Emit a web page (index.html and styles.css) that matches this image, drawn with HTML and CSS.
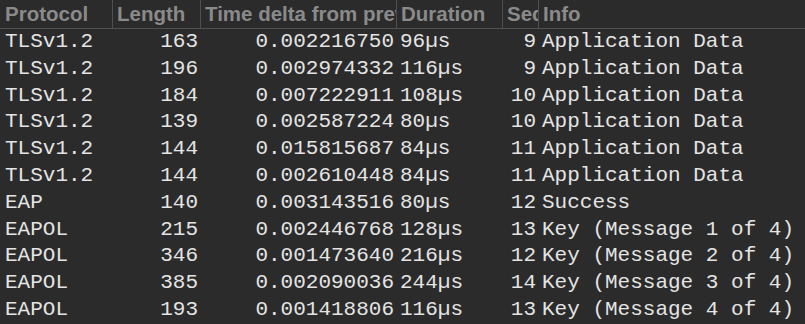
FILE: index.html
```html
<!DOCTYPE html>
<html>
<head>
<meta charset="utf-8">
<link rel="stylesheet" href="styles.css">
</head>
<body>
<div class="table">
  <div class="row head">
    <div class="cell first">Protocol</div>
    <div class="cell">Length</div>
    <div class="cell">Time delta from previous captured frame</div>
    <div class="cell">Duration</div>
    <div class="cell">Sequence</div>
    <div class="cell last">Info</div>
  </div>
  <div class="row"><div class="cell first">TLSv1.2</div><div class="cell num">163</div><div class="cell num">0.002216750</div><div class="cell">96µs</div><div class="cell num">9</div><div class="cell info">Application Data</div></div>
  <div class="row"><div class="cell first">TLSv1.2</div><div class="cell num">196</div><div class="cell num">0.002974332</div><div class="cell">116µs</div><div class="cell num">9</div><div class="cell info">Application Data</div></div>
  <div class="row"><div class="cell first">TLSv1.2</div><div class="cell num">184</div><div class="cell num">0.007222911</div><div class="cell">108µs</div><div class="cell num">10</div><div class="cell info">Application Data</div></div>
  <div class="row"><div class="cell first">TLSv1.2</div><div class="cell num">139</div><div class="cell num">0.002587224</div><div class="cell">80µs</div><div class="cell num">10</div><div class="cell info">Application Data</div></div>
  <div class="row"><div class="cell first">TLSv1.2</div><div class="cell num">144</div><div class="cell num">0.015815687</div><div class="cell">84µs</div><div class="cell num">11</div><div class="cell info">Application Data</div></div>
  <div class="row"><div class="cell first">TLSv1.2</div><div class="cell num">144</div><div class="cell num">0.002610448</div><div class="cell">84µs</div><div class="cell num">11</div><div class="cell info">Application Data</div></div>
  <div class="row"><div class="cell first">EAP</div><div class="cell num">140</div><div class="cell num">0.003143516</div><div class="cell">80µs</div><div class="cell num">12</div><div class="cell info">Success</div></div>
  <div class="row"><div class="cell first">EAPOL</div><div class="cell num">215</div><div class="cell num">0.002446768</div><div class="cell">128µs</div><div class="cell num">13</div><div class="cell info">Key (Message 1 of 4)</div></div>
  <div class="row"><div class="cell first">EAPOL</div><div class="cell num">346</div><div class="cell num">0.001473640</div><div class="cell">216µs</div><div class="cell num">12</div><div class="cell info">Key (Message 2 of 4)</div></div>
  <div class="row"><div class="cell first">EAPOL</div><div class="cell num">385</div><div class="cell num">0.002090036</div><div class="cell">244µs</div><div class="cell num">14</div><div class="cell info">Key (Message 3 of 4)</div></div>
  <div class="row"><div class="cell first">EAPOL</div><div class="cell num">193</div><div class="cell num">0.001418806</div><div class="cell">116µs</div><div class="cell num">13</div><div class="cell info">Key (Message 4 of 4)</div></div>
</div>
</body>
</html>
```
FILE: styles.css
```css
html, body {
  margin: 0;
  padding: 0;
  background: #2b2b2b;
  overflow: hidden;
}
.table {
  width: 805px;
  height: 324px;
  background: #2b2b2b;
}
.row {
  display: grid;
  grid-template-columns: 113px 88px 196px 106px 36px 1fr;
  height: 26.8px;
  font-family: "Courier New", "Nimbus Mono PS", "Nimbus Mono L", "FreeMono", "Liberation Mono", monospace;
  font-size: 21px;
  line-height: 26.8px;
  color: #e4e4e4;
}
.row.head {
  height: 29px;
  box-sizing: border-box;
  border-bottom: 1px solid #4f4f4f;
  font-family: "Liberation Sans", Arial, sans-serif;
  font-weight: bold;
  font-size: 20.5px;
  line-height: 27px;
  color: #8a8a8a;
}
.cell {
  box-sizing: border-box;
  padding: 0 3px;
  white-space: pre;
  overflow: hidden;
}
.head .cell {
  border-right: 1px solid #4f4f4f;
  padding: 0 4px;
  height: 28px;
}
.head .cell.last {
  border-right: none;
}
.cell.first {
  padding-left: 5px;
}
.cell.num {
  text-align: right;
}
.cell.info {
  padding-left: 3px;
}
```
